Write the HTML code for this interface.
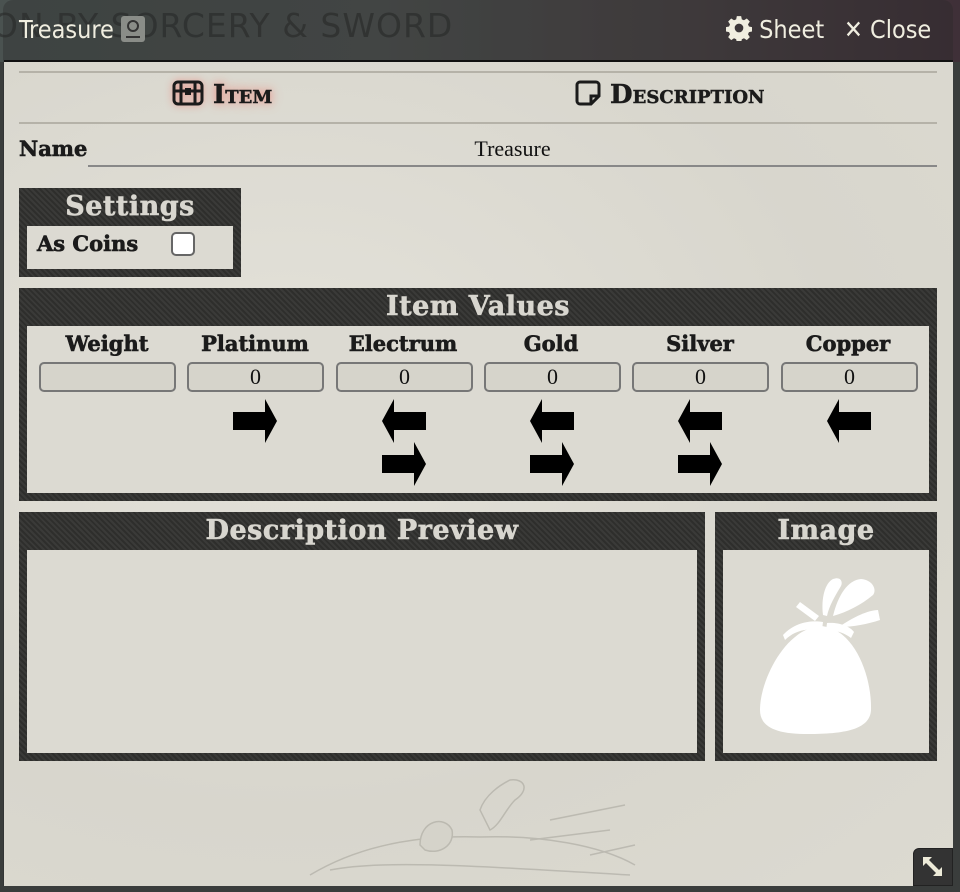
<!DOCTYPE html>
<html><head><meta charset="utf-8">
<style>
*{box-sizing:border-box;margin:0;padding:0}
body{width:960px;height:886px;overflow:hidden;background:#3a3d3c;position:relative;font-family:"Liberation Serif",serif}
.bgtop{position:absolute;left:0;top:0;width:960px;height:62px;background:linear-gradient(90deg,#4a5250 0%,#505553 40%,#4b4446 70%,#3f3038 100%)}
.bgtext{position:absolute;left:-8px;top:6px;font:33px "DejaVu Sans",sans-serif;color:#2e3130;letter-spacing:1px;opacity:.75}
.win{position:absolute;left:3px;top:0;width:950px;height:886px;border-radius:10px 10px 0 0;background:rgba(40,40,40,.35)}
.title{position:absolute;left:19px;top:15px;font:25px "DejaVu Sans Condensed","DejaVu Sans",sans-serif;color:#f0eee0}
.tbtn{position:absolute;top:15px;font:25px "DejaVu Sans Condensed","DejaVu Sans",sans-serif;color:#f0eee0}
.body{position:absolute;left:4px;top:60px;width:949px;height:826px;border-top:2px solid #111;background-image:radial-gradient(ellipse at 30% 40%,#e4e2da 0%,#d8d6cd 60%,#dcdad1 100%)}
.hr{position:absolute;left:19px;width:918px;height:2px;background:#b5b2a8}
.tab{position:absolute;top:80px;font:bold 26px "DejaVu Serif",serif;color:#1b1b1b;font-variant:small-caps;-webkit-text-stroke:.5px #1b1b1b}
.lbl{font:bold 21px "DejaVu Serif",serif;color:#1b1b1b;-webkit-text-stroke:.6px #1b1b1b}
.box{position:absolute;background:#333331;background-image:repeating-linear-gradient(45deg,#2e2e2c 0 2px,#3a3a38 2px 4px)}
.box h3{text-align:center;color:#d8d6cf;font:bold 27px "DejaVu Serif",serif;letter-spacing:.5px;height:38px;line-height:38px;-webkit-text-stroke:.6px #d8d6cf}
.inner{position:absolute;left:8px;top:38px;right:8px;bottom:8px;background:#dcdad2}
.col{position:absolute;top:331px;width:148px;text-align:center}
.inp{position:absolute;top:362px;width:137px;height:30px;border:2px solid #777;border-radius:5px;background:#d6d4cb;text-align:center;font:22px "Liberation Serif",serif;line-height:26px;color:#111}
.ar{position:absolute;width:44px;height:44px}
</style></head><body>
<div class="bgtop"></div>
<div class="bgtext">ON BY SORCERY &amp; SWORD</div>
<div class="win"></div>
<div class="title">Treasure <span style="display:inline-block;width:24px;height:26px;background:#8a8d88;border-radius:3px;vertical-align:-4px;position:relative"><span style="position:absolute;left:6px;top:4px;width:12px;height:12px;border:2px solid #333;border-radius:50%"></span><span style="position:absolute;left:5px;top:20px;width:14px;height:2px;background:#333"></span></span></div>
<div class="tbtn" style="left:726px"><svg width="26" height="26" viewBox="0 0 24 24" style="vertical-align:-3px"><path fill="#f0eee0" d="M10 1h4l.6 3 2 .9 2.6-1.7 2.8 2.8-1.7 2.6.9 2 3 .6v4l-3 .6-.9 2 1.7 2.6-2.8 2.8-2.6-1.7-2 .9-.6 3h-4l-.6-3-2-.9-2.6 1.7-2.8-2.8 1.7-2.6-.9-2-3-.6v-4l3-.6.9-2-1.7-2.6 2.8-2.8 2.6 1.7 2-.9z M12 8a4 4 0 1 0 0 8a4 4 0 1 0 0-8z" fill-rule="evenodd"/></svg> Sheet</div>
<div class="tbtn" style="left:844px">✕ Close</div>
<div class="body"></div>
<div class="hr" style="top:71px"></div>
<div class="hr" style="top:122px"></div>
<div class="tab" style="left:172px;text-shadow:0 0 8px #e89a90,0 0 12px #e8a095"><svg width="32" height="26" viewBox="0 0 32 26" style="vertical-align:-3px;filter:drop-shadow(0 0 4px #e8958a)"><rect x="2" y="2" width="28" height="22" rx="4" fill="none" stroke="#1b1b1b" stroke-width="3"/><line x1="2" y1="11" x2="30" y2="11" stroke="#1b1b1b" stroke-width="3"/><line x1="9" y1="2" x2="9" y2="24" stroke="#1b1b1b" stroke-width="3"/><line x1="23" y1="2" x2="23" y2="24" stroke="#1b1b1b" stroke-width="3"/><rect x="13" y="8" width="6" height="7" fill="#1b1b1b"/></svg> Item</div>
<div class="tab" style="left:575px"><svg width="26" height="26" viewBox="0 0 26 26" style="vertical-align:-3px"><path d="M5 2h16a3 3 0 0 1 3 3v11l-8 8H5a3 3 0 0 1-3-3V5a3 3 0 0 1 3-3z" fill="none" stroke="#1b1b1b" stroke-width="3"/><path d="M16 24v-8h8" fill="none" stroke="#1b1b1b" stroke-width="3"/></svg> Description</div>
<div class="lbl" style="position:absolute;left:19px;top:136px">Name</div>
<div style="position:absolute;left:88px;top:165px;width:849px;height:2px;background:#888"></div>
<div style="position:absolute;left:88px;top:136px;width:849px;text-align:center;font:22px 'Liberation Serif',serif;color:#111">Treasure</div>

<div class="box" style="left:19px;top:188px;width:222px;height:89px"><h3>Settings</h3><div class="inner"><span class="lbl" style="position:absolute;left:10px;top:5px">As Coins</span><div style="position:absolute;left:144px;top:6px;width:24px;height:24px;border:2px solid #666;border-radius:5px;background:#fff"></div></div></div>

<div class="box" style="left:19px;top:288px;width:918px;height:213px"><h3>Item Values</h3><div class="inner"></div></div>
<div class="col lbl" style="left:33px;top:331px">Weight</div>
<div class="col lbl" style="left:181px;top:331px">Platinum</div>
<div class="col lbl" style="left:329px;top:331px">Electrum</div>
<div class="col lbl" style="left:477px;top:331px">Gold</div>
<div class="col lbl" style="left:626px;top:331px">Silver</div>
<div class="col lbl" style="left:774px;top:331px">Copper</div>
<div class="inp" style="left:39px"></div>
<div class="inp" style="left:187px">0</div>
<div class="inp" style="left:336px">0</div>
<div class="inp" style="left:484px">0</div>
<div class="inp" style="left:632px">0</div>
<div class="inp" style="left:781px">0</div>
<svg width="0" height="0" style="position:absolute"><defs><polygon id="r" points="0,13 32,13 32,0 44,22 32,44 32,31 0,31"/><polygon id="l" points="44,13 12,13 12,0 0,22 12,44 12,31 44,31"/></defs></svg>
<svg class="ar" style="left:233px;top:399px"><use href="#r"/></svg>
<svg class="ar" style="left:382px;top:399px"><use href="#l"/></svg>
<svg class="ar" style="left:382px;top:442px"><use href="#r"/></svg>
<svg class="ar" style="left:530px;top:399px"><use href="#l"/></svg>
<svg class="ar" style="left:530px;top:442px"><use href="#r"/></svg>
<svg class="ar" style="left:678px;top:399px"><use href="#l"/></svg>
<svg class="ar" style="left:678px;top:442px"><use href="#r"/></svg>
<svg class="ar" style="left:827px;top:399px"><use href="#l"/></svg>

<div class="box" style="left:19px;top:512px;width:686px;height:249px"><h3>Description Preview</h3><div class="inner"></div></div>
<div class="box" style="left:715px;top:512px;width:222px;height:249px"><h3>Image</h3><div class="inner">
<svg width="206" height="203" viewBox="0 0 206 203" style="position:absolute;left:0;top:0">
<path d="M96 76 C62 80 37 130 37 160 C37 178 55 184 85 184 C120 184 147 180 148 160 C149 125 130 76 96 76Z" fill="#fff"/>
<path d="M60 85 C72 72 88 70 100 72 L99 80 C86 78 72 80 62 90Z" fill="#fff"/>
<path d="M104 73 C115 72 127 76 131 82 L128 88 C120 82 112 80 103 81Z" fill="#fff"/>
<path d="M77 52 L96 66 L92 71 L73 57Z" fill="#fff"/>
<path d="M100 65 C98 48 102 33 110 29 C118 26 120 32 118 36 C112 46 106 56 104 66Z" fill="#fff"/>
<path d="M110 66 C115 45 125 30 138 29 C150 30 154 40 150 45 C138 55 124 62 110 66Z" fill="#fff"/>
<path d="M116 77 C130 67 146 60 155 60 L157 70 C145 74 130 77 116 77Z" fill="#fff"/>
</svg></div></div>

<svg style="position:absolute;left:300px;top:775px" width="340" height="111" viewBox="0 0 340 111" opacity=".3">
<g fill="none" stroke="#7a7870" stroke-width="1.5">
<path d="M10 100 C60 70 120 60 180 62 C240 60 300 70 335 90"/>
<path d="M120 70 C120 45 145 40 152 55 C155 70 140 80 125 75Z" fill="#cfcdc4"/>
<path d="M180 35 C185 20 200 10 210 5 C225 3 230 15 215 25 C205 35 200 50 190 55Z"/>
<path d="M230 65 L310 55 M250 45 L325 30 M290 80 L335 70"/>
<path d="M30 95 C80 85 160 90 330 100"/>
</g>
</svg>

<div style="position:absolute;left:913px;top:848px;width:40px;height:38px;background:#333;border-radius:6px 0 0 0;border:1px solid #222">
<svg width="40" height="38" viewBox="0 0 40 38"><path d="M9 8h9l-3 3 10 10 3-3v9h-9l3-3-10-10-3 3z" fill="#ecead8"/></svg></div>
</body></html>
